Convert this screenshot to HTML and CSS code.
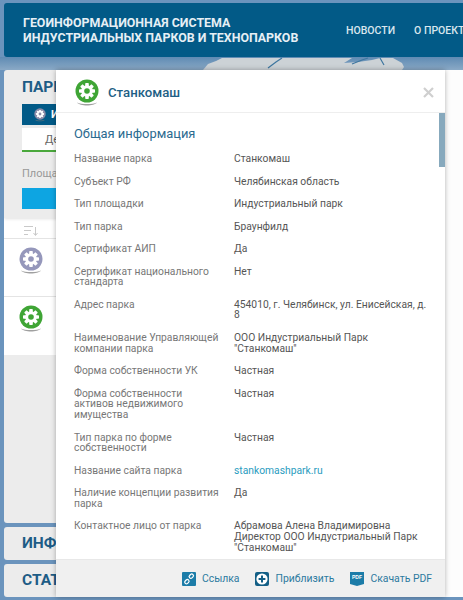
FILE: index.html
```html
<!DOCTYPE html>
<html lang="en">
<head>
    <meta charset="UTF-8">
    <meta name="viewport" content="width=device-width, initial-scale=1.0">
    <title>Индустриальные парки</title>
    <link rel="stylesheet" href="styles.css">
</head>
<body>
    <svg class="defs" width="0" height="0">
        <symbol id="gear" viewBox="0 0 24 28">
            <path d="M2 23.5C5 27.5 19 27.5 22 23.5C18 25.5 6 25.5 2 23.5Z" fill="#777" opacity="0.7"/>
            <circle cx="12" cy="12" r="11.5" fill="currentColor"/>
            <circle cx="12" cy="12" r="5.8" fill="#fff"/>
            <g fill="#fff">
                <rect x="10.2" y="4" width="3.6" height="16" rx="0.8"/>
                <rect x="10.2" y="4" width="3.6" height="16" rx="0.8" transform="rotate(45 12 12)"/>
                <rect x="10.2" y="4" width="3.6" height="16" rx="0.8" transform="rotate(90 12 12)"/>
                <rect x="10.2" y="4" width="3.6" height="16" rx="0.8" transform="rotate(135 12 12)"/>
            </g>
            <circle cx="12" cy="12" r="2.8" fill="currentColor"/>
        </symbol>
    </svg>

    <svg class="land" width="463" height="13" viewBox="0 0 463 13">
        <path d="M203 13L208 7L216 4L222 1H352L344 6L358 5L372 3L380 1H393L402 6L404 10L402 13Z" fill="#ccd2d6"/>
        <path d="M268 11L276 5L282 1M352 7L362 3L368 1M380 1L384 8" stroke="#3f77a0" stroke-width="1.2" fill="none"/>
    </svg>

    <header class="top-bar">
        <div class="site-title">Геоинформационная система<br>индустриальных парков и технопарков</div>
        <nav class="top-nav">
            <a>Новости</a>
            <a>О проекте</a>
        </nav>
    </header>

    <div class="content">
        <aside class="side">
            <section class="parks">
                <div class="parks-top">
                    <h2>Парки</h2>
                    <div class="tab-dark">
                        <svg class="tab-icon" width="14" height="14"><use href="#gear"/></svg>
                        Индустриальные
                    </div>
                    <div class="tab-white">Действующие</div>
                    <div class="area-label">Площадь</div>
                    <div class="blue-btn"></div>
                </div>
                <div class="park-list">
                    <div class="sort-row">
                        <svg width="16" height="12" viewBox="0 0 16 12" fill="none" stroke="#c9c9c9">
                            <path d="M1 1.5H10M1 5.5H8M1 9.5H5M12.5 2V10M10.5 8L12.5 10.5L14.5 8"/>
                        </svg>
                    </div>
                    <div class="park-row">
                        <svg class="icon-violet" width="24" height="28"><use href="#gear"/></svg>
                    </div>
                    <div class="park-row">
                        <svg class="icon-green" width="24" height="28"><use href="#gear"/></svg>
                    </div>
                </div>
            </section>
            <section class="fold">Информация</section>
            <section class="fold">Статистика</section>
        </aside>
        <div class="map-blank"></div>
    </div>

    <div class="modal">
        <div class="modal-head">
            <svg class="icon-green" width="24" height="28"><use href="#gear"/></svg>
            <span class="modal-title">Станкомаш</span>
            <svg class="modal-close" width="11" height="11" viewBox="0 0 11 11">
                <path d="M1 1L10 10M10 1L1 10" stroke="#cfcfcf" stroke-width="2.2"/>
            </svg>
        </div>
        <div class="modal-body">
            <div class="scroll-thumb"></div>
            <h3>Общая информация</h3>
            <dl class="info">
                <dt>Название парка</dt><dd>Станкомаш</dd>
                <dt>Субъект РФ</dt><dd>Челябинская область</dd>
                <dt>Тип площадки</dt><dd>Индустриальный парк</dd>
                <dt>Тип парка</dt><dd>Браунфилд</dd>
                <dt>Сертификат АИП</dt><dd>Да</dd>
                <dt>Сертификат национального стандарта</dt><dd>Нет</dd>
                <dt>Адрес парка</dt><dd>454010, г. Челябинск, ул. Енисейская, д.<br>8</dd>
                <dt>Наименование Управляющей компании парка</dt><dd>ООО Индустриальный Парк<br>"Станкомаш"</dd>
                <dt>Форма собственности УК</dt><dd>Частная</dd>
                <dt>Форма собственности<br>активов недвижимого<br>имущества</dt><dd>Частная</dd>
                <dt>Тип парка по форме собственности</dt><dd>Частная</dd>
                <dt>Название сайта парка</dt><dd><a>stankomashpark.ru</a></dd>
                <dt>Наличие концепции развития парка</dt><dd>Да</dd>
                <dt>Контактное лицо от парка</dt><dd>Абрамова Алена Владимировна<br>Директор ООО Индустриальный Парк<br>"Станкомаш"</dd>
            </dl>
        </div>
        <div class="modal-foot">
            <a class="foot-link">
                <svg width="14" height="14" viewBox="0 0 14 14">
                    <rect width="14" height="14" rx="1" fill="#1c7ca8"/>
                    <g fill="none" stroke="#fff" stroke-width="1.2">
                        <rect x="7" y="2.5" width="4.6" height="3.4" rx="1.6" transform="rotate(-45 9.3 4.2)"/>
                        <rect x="2.6" y="8" width="4.6" height="3.4" rx="1.6" transform="rotate(-45 4.9 9.7)"/>
                    </g>
                </svg>
                Ссылка
            </a>
            <a class="foot-link">
                <svg width="14" height="14" viewBox="0 0 14 14">
                    <rect width="14" height="14" rx="2" fill="#135f86"/>
                    <circle cx="7" cy="7" r="5.6" fill="#fff"/>
                    <path d="M7 3.6V10.4M3.6 7H10.4" stroke="#135f86" stroke-width="2"/>
                </svg>
                Приблизить
            </a>
            <a class="foot-link">
                <svg width="14" height="14" viewBox="0 0 14 14">
                    <path d="M0 0H14V12L7 14L0 12Z" fill="#1c7ca8"/>
                    <text x="7" y="6.5" class="pdf-mark">PDF</text>
                </svg>
                Скачать PDF
            </a>
        </div>
    </div>
</body>
</html>
```

FILE: styles.css
```css
* {
    box-sizing: border-box;
}
html, body {
    height: 100%;
}
body {
    margin: 0;
    padding-top: 3px;
    background: #6b94bd;
    font-family: Roboto, sans-serif;
    overflow: hidden;
    position: relative;
}
.defs {
    position: absolute;
}
.land {
    position: absolute;
    top: 57px;
    left: 0;
    background: linear-gradient(#5f8bb3, #8aa9c6);
}

/* top bar */
.top-bar {
    display: flex;
    align-items: center;
    height: 54px;
    margin-left: 4px;
    padding-left: 19px;
    background: #025a87;
    border-radius: 3px 0 0 3px;
    position: relative;
}
.site-title {
    width: 323px;
    flex: none;
    color: #e6eff5;
    font-size: 12.4px;
    font-weight: 700;
    line-height: 15px;
    text-transform: uppercase;
    white-space: nowrap;
}
.top-nav {
    display: flex;
    gap: 19px;
    color: #d9e6ee;
    font-size: 10.5px;
    font-weight: 500;
    text-transform: uppercase;
    white-space: nowrap;
}

/* left column */
.content {
    display: flex;
    height: 527px;
    margin-top: 13px;
    position: relative;
}
.side {
    width: 300px;
    flex: none;
    margin-left: 4px;
    display: flex;
    flex-direction: column;
    gap: 4px;
}
.map-blank {
    flex: 1;
    background: #fdfdfd;
}
.parks {
    flex: 1;
    background: #ececec;
    border-radius: 3px;
    overflow: hidden;
}
.parks-top {
    height: 148px;
    padding: 7px 18px 0;
    box-shadow: 0 1px 3px rgba(0,0,0,0.12);
    position: relative;
}
.parks-top h2 {
    margin: 0;
    color: #1d5c86;
    font-size: 15.5px;
    font-weight: 700;
    line-height: 20px;
    text-transform: uppercase;
}
.tab-dark {
    display: flex;
    align-items: center;
    gap: 4px;
    height: 21px;
    margin-top: 7px;
    padding-left: 11px;
    background: #025a87;
    color: #fff;
    font-size: 11px;
    font-weight: 700;
}
.tab-icon {
    color: #8b8ca8;
}
.tab-white {
    height: 24px;
    margin-top: 3px;
    padding-left: 23px;
    background: #fff;
    border-bottom: 2px solid #4aa83c;
    color: #666;
    font-size: 11px;
    line-height: 24px;
}
.area-label {
    margin-top: 15px;
    color: #999;
    font-size: 11px;
    line-height: 13px;
}
.blue-btn {
    height: 21px;
    margin-top: 8px;
    background: #0da5e2;
}
.park-list {
    height: 137px;
    background: #fff;
}
.sort-row {
    height: 21px;
    padding: 4px 0 0 19px;
    border-bottom: 1px solid #e4e4e4;
}
.park-row {
    height: 58px;
    padding: 8px 0 0 15px;
    border-bottom: 1px solid #e4e4e4;
}
.park-row:last-child {
    border-bottom: none;
}
.icon-violet {
    color: #9597bb;
}
.icon-green {
    color: #3fa535;
}
.fold {
    height: 33px;
    flex: none;
    padding-left: 18px;
    background: #ececec;
    border-radius: 3px;
    color: #1d5c86;
    font-size: 15.5px;
    font-weight: 700;
    line-height: 33px;
    text-transform: uppercase;
}

/* park card */
.modal {
    position: absolute;
    top: 70px;
    left: 56px;
    width: 389px;
    height: 527px;
    display: flex;
    flex-direction: column;
    background: #fff;
    box-shadow: 0 0 5px rgba(0,0,0,0.3);
}
.modal-head {
    display: flex;
    align-items: center;
    height: 43px;
    flex: none;
    padding: 3px 11px 0 19px;
    border-bottom: 1px solid #eee;
}
.modal-title {
    margin-left: 9px;
    color: #1f5f85;
    font-size: 13.2px;
    font-weight: 500;
}
.modal-close {
    margin-left: auto;
}
.modal-body {
    flex: 1;
    padding: 13px 0 0 18px;
    overflow: hidden;
    position: relative;
}
.scroll-thumb {
    position: absolute;
    top: 0;
    right: 0;
    width: 6px;
    height: 54px;
    background: #87a9bd;
}
.modal-body h3 {
    margin: 0 0 12px;
    color: #2b6a8f;
    font-size: 12.9px;
    font-weight: 400;
    line-height: 16px;
}
.info {
    display: grid;
    grid-template-columns: 160px 206px;
    row-gap: 11.8px;
    margin: 0;
    font-size: 10.3px;
    line-height: 10.7px;
}
.info dt {
    width: 150px;
    color: #777;
}
.info dd {
    margin: 0;
    color: #555;
}
.info a {
    color: #2a9cc0;
}
.modal-foot {
    display: flex;
    align-items: center;
    justify-content: flex-end;
    gap: 16px;
    height: 38px;
    flex: none;
    padding-right: 13px;
    background: #f0f0f0;
    border-top: 1px solid #e8e8e8;
}
.foot-link {
    display: flex;
    align-items: center;
    gap: 6px;
    color: #2c7a9f;
    font-size: 10.4px;
}
.pdf-mark {
    fill: #fff;
    font-family: "Liberation Sans", sans-serif;
    font-size: 5px;
    font-weight: 700;
    text-anchor: middle;
}
```
